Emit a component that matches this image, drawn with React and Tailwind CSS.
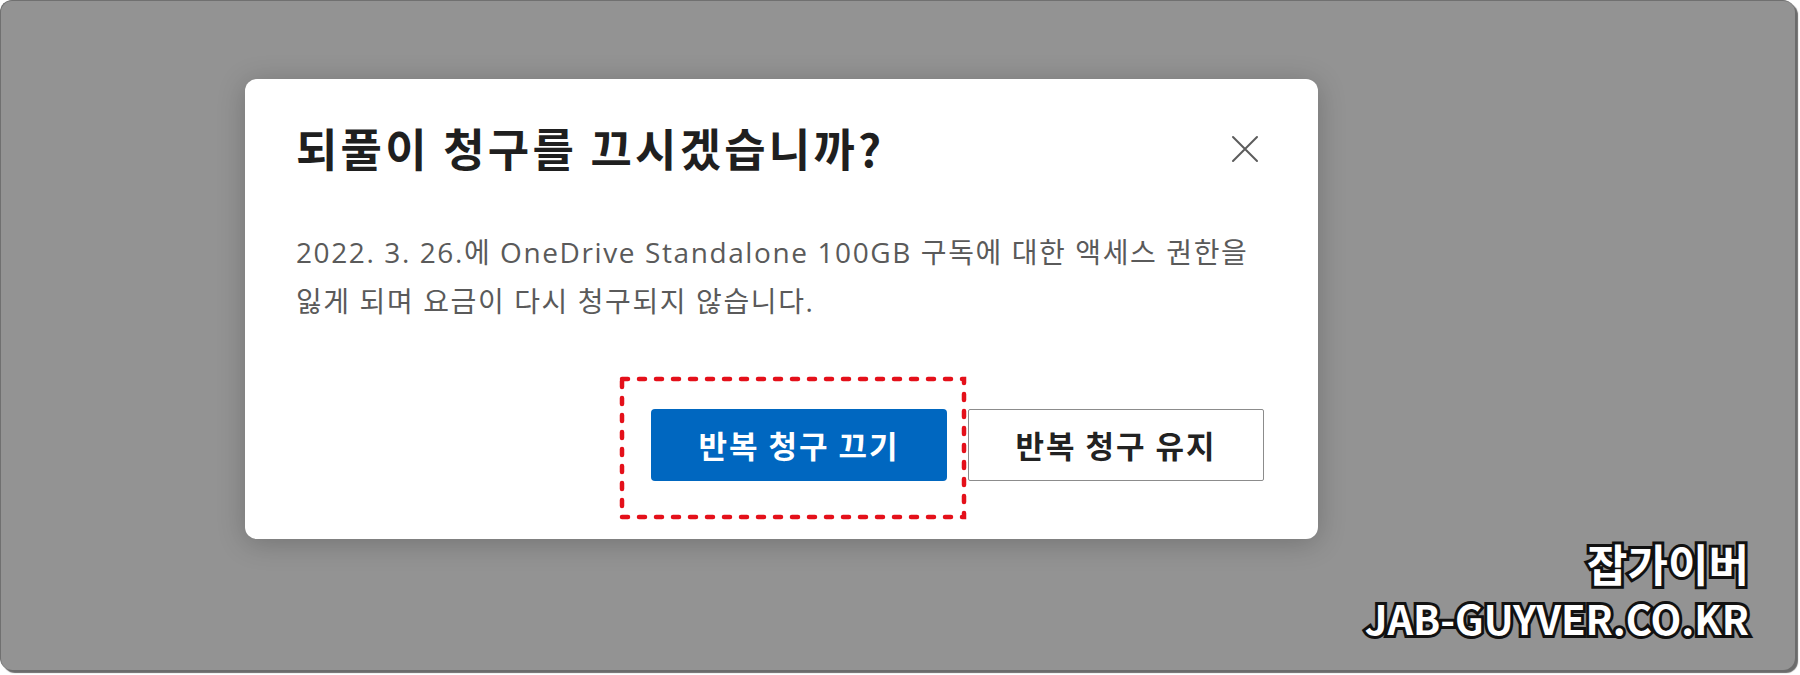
const KR = "font-['Noto_Sans_CJK_KR','Noto_Sans',sans-serif]"

const CloseIcon = () => (
  <svg width="28" height="28" viewBox="0 0 28 28" fill="none">
    <path d="M2 2L26 26M26 2L2 26" stroke="#5c5c5c" strokeWidth="2" strokeLinecap="round" />
  </svg>
)

const App = () => {
  return (
    <div className={`w-[1800px] h-[675px] bg-white ${KR}`}>
      <div className="relative w-[1795px] h-[670px] rounded-[12px] bg-[#939393] border-t border-l border-[#707070] shadow-[3px_3px_1px_#6b6b6b] pl-[244px] pt-[78px]">
        {/* dialog */}
        <div className="relative w-[1073px] h-[460px] bg-white rounded-[12px] shadow-[0_4px_28px_rgba(0,0,0,0.22)] pl-[51px] pr-[54px] pt-[40px]">
          <div className="flex items-center justify-between">
            <h2 className="text-[45px] leading-[58px] font-semibold text-[#1f1f1f] tracking-[3.2px]">
              되풀이 청구를 끄시겠습니까?
            </h2>
            <button className="mr-[5px] mt-[2px]">
              <CloseIcon />
            </button>
          </div>

          <p className="mt-[51px] text-[28px] leading-[49px] text-[#5a5a5a] font-['Open_Sans','Noto_Sans_CJK_KR',sans-serif] tracking-[1.6px]">
            2022. 3. 26.에 OneDrive Standalone 100GB 구독에 대한 액세스 권한을
            <br />
            잃게 되며 요금이 다시 청구되지 않습니다.
          </p>

          <div className="mt-[83px] flex justify-end gap-[21px]">
            <button className="w-[296px] h-[72px] rounded-[4px] bg-[#0067c0] text-white text-[31px] font-semibold tracking-[2px]">
              반복 청구 끄기
            </button>
            <button className="w-[296px] h-[72px] rounded-[2px] border border-[#8c8c8c] bg-white text-[#222222] text-[31px] font-semibold tracking-[2px]">
              반복 청구 유지
            </button>
          </div>

          {/* red dashed annotation */}
          <svg className="absolute left-[374px] top-[297px]" width="348" height="144" viewBox="0 0 348 144" fill="none">
            <rect
              x="3"
              y="3"
              width="342"
              height="138"
              stroke="#e4101a"
              strokeWidth="4.5"
              strokeDasharray="6 11"
              strokeLinecap="round"
            />
          </svg>
        </div>

        {/* watermark */}
        <div className="absolute right-[46px] bottom-[26px] flex flex-col items-end font-bold text-white [paint-order:stroke_fill] [-webkit-text-stroke:6px_#111]">
          <span className="text-[44px] leading-[58px]">잡가이버</span>
          <span className="text-[40px] leading-[52px] tracking-[0px]">JAB-GUYVER.CO.KR</span>
        </div>
      </div>
    </div>
  )
}

export default App
